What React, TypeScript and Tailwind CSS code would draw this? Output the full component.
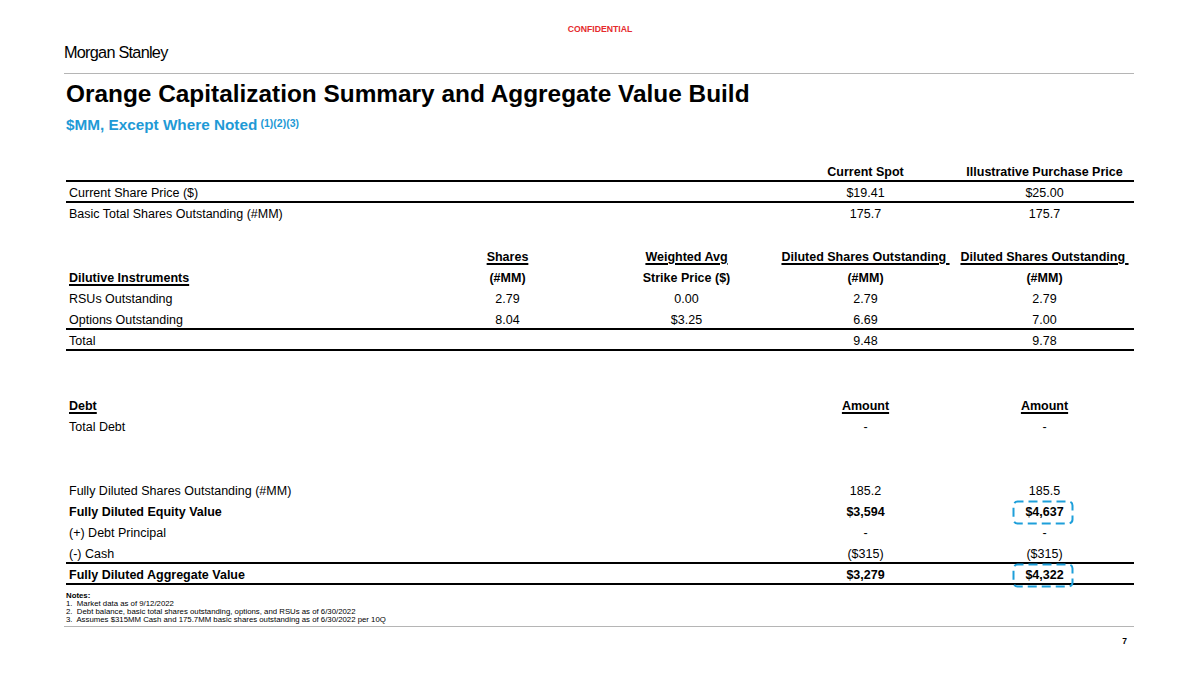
import React from 'react';

type Row = {
  label?: React.ReactNode;
  cells: React.ReactNode[];
  bold?: boolean;
  line?: boolean;
};

function DashBox() {
  return (
    <svg
      className="absolute left-[-32px] top-[-3px] pointer-events-none"
      width="62"
      height="25"
      viewBox="0 0 62 25"
    >
      <rect
        x="1.5"
        y="1.5"
        width="59"
        height="22"
        rx="4"
        fill="none"
        stroke="#1e9fda"
        strokeWidth="2"
        strokeDasharray="9 5"
        strokeDashoffset="3"
      />
    </svg>
  );
}

function Boxed({ children }: { children: React.ReactNode }) {
  return (
    <span className="relative inline-block">
      <span className="absolute left-1/2 top-0 w-0 h-full">
        <DashBox />
      </span>
      {children}
    </span>
  );
}

function TableRow({ label, cells, bold, line }: Row) {
  return (
    <div
      className={`grid grid-cols-[352px_179px_179px_179px_179px] h-[21px] pt-[2px] items-center ${
        line ? 'border-b-2 border-black' : ''
      } ${bold ? 'font-bold' : ''}`}
    >
      <div className="pl-[3px] whitespace-nowrap">{label}</div>
      {cells.map((c, i) => (
        <div key={i} className="text-center whitespace-nowrap">
          {c}
        </div>
      ))}
    </div>
  );
}

const U = ({ children }: { children: React.ReactNode }) => (
  <span className="underline decoration-[1.5px] underline-offset-2">{children}</span>
);

export default function App() {
  return (
    <div className="w-[1200px] h-[675px] bg-white text-black font-['Liberation_Sans',Arial,sans-serif] overflow-hidden">
      <div className="pt-[23px] text-center text-[8.7px] leading-[12px] font-bold text-[#e52a2e]">
        CONFIDENTIAL
      </div>

      <div className="pl-[64px] w-[1134px]">
        <div className="mt-[8px] text-[16.3px] leading-[18px] tracking-[-0.75px]">
          Morgan Stanley
        </div>
        <div className="mt-[12px] h-px bg-[#b5b5b5]" />

        <h1 className="mt-[6px] pl-[2px] text-[24.4px] leading-[28px] font-bold">
          Orange Capitalization Summary and Aggregate Value Build
        </h1>
        <div className="mt-[7px] pl-[2px] text-[15.3px] leading-[20px] font-bold text-[#1f9ad6]">
          $MM, Except Where Noted{' '}
          <sup className="text-[10.5px] relative top-[-3px] ml-[-1px]">(1)(2)(3)</sup>
        </div>

        <div className="mt-[26px] ml-[2px] w-[1068px] text-[12.5px]">
          <TableRow
            bold
            line
            cells={['', '', 'Current Spot', 'Illustrative Purchase Price']}
          />
          <TableRow
            line
            label="Current Share Price ($)"
            cells={['', '', '$19.41', '$25.00']}
          />
          <TableRow
            label="Basic Total Shares Outstanding (#MM)"
            cells={['', '', '175.7', '175.7']}
          />

          <div className="h-[22px]" />

          <TableRow
            bold
            cells={[
              <U>Shares</U>,
              <U>Weighted Avg</U>,
              <U>Diluted Shares Outstanding{'\u00a0'}</U>,
              <U>Diluted Shares Outstanding{'\u00a0'}</U>,
            ]}
          />
          <TableRow
            bold
            label={<U>Dilutive Instruments</U>}
            cells={['(#MM)', 'Strike Price ($)', '(#MM)', '(#MM)']}
          />
          <TableRow
            label="RSUs Outstanding"
            cells={['2.79', '0.00', '2.79', '2.79']}
          />
          <TableRow
            line
            label="Options Outstanding"
            cells={['8.04', '$3.25', '6.69', '7.00']}
          />
          <TableRow line label="Total" cells={['', '', '9.48', '9.78']} />

          <div className="h-[44px]" />

          <TableRow
            bold
            label={<U>Debt</U>}
            cells={['', '', <U>Amount</U>, <U>Amount</U>]}
          />
          <TableRow label="Total Debt" cells={['', '', '-', '-']} />

          <div className="h-[43px]" />

          <TableRow
            label="Fully Diluted Shares Outstanding (#MM)"
            cells={['', '', '185.2', '185.5']}
          />
          <TableRow
            bold
            label="Fully Diluted Equity Value"
            cells={['', '', '$3,594', <Boxed>$4,637</Boxed>]}
          />
          <TableRow label="(+) Debt Principal" cells={['', '', '-', '-']} />
          <TableRow
            line
            label="(-) Cash"
            cells={['', '', '($315)', '($315)']}
          />
          <TableRow
            bold
            line
            label="Fully Diluted Aggregate Value"
            cells={['', '', '$3,279', <Boxed>$4,322</Boxed>]}
          />
        </div>

        <div className="mt-[7px] pl-[2px] text-[7.8px] leading-[8px]">
          <div className="font-bold">Notes:</div>
          <div>1.&nbsp; Market data as of 9/12/2022</div>
          <div>
            2.&nbsp; Debt balance, basic total shares outstanding, options, and
            RSUs as of 6/30/2022
          </div>
          <div>
            3.&nbsp; Assumes $315MM Cash and 175.7MM basic shares outstanding as
            of 6/30/2022 per 10Q
          </div>
        </div>
        <div className="mt-[2px] h-px bg-[#b5b5b5]" />
        <div className="mt-[9px] pr-[7px] text-right text-[8.5px] leading-[10px] font-bold">
          7
        </div>
      </div>
    </div>
  );
}
